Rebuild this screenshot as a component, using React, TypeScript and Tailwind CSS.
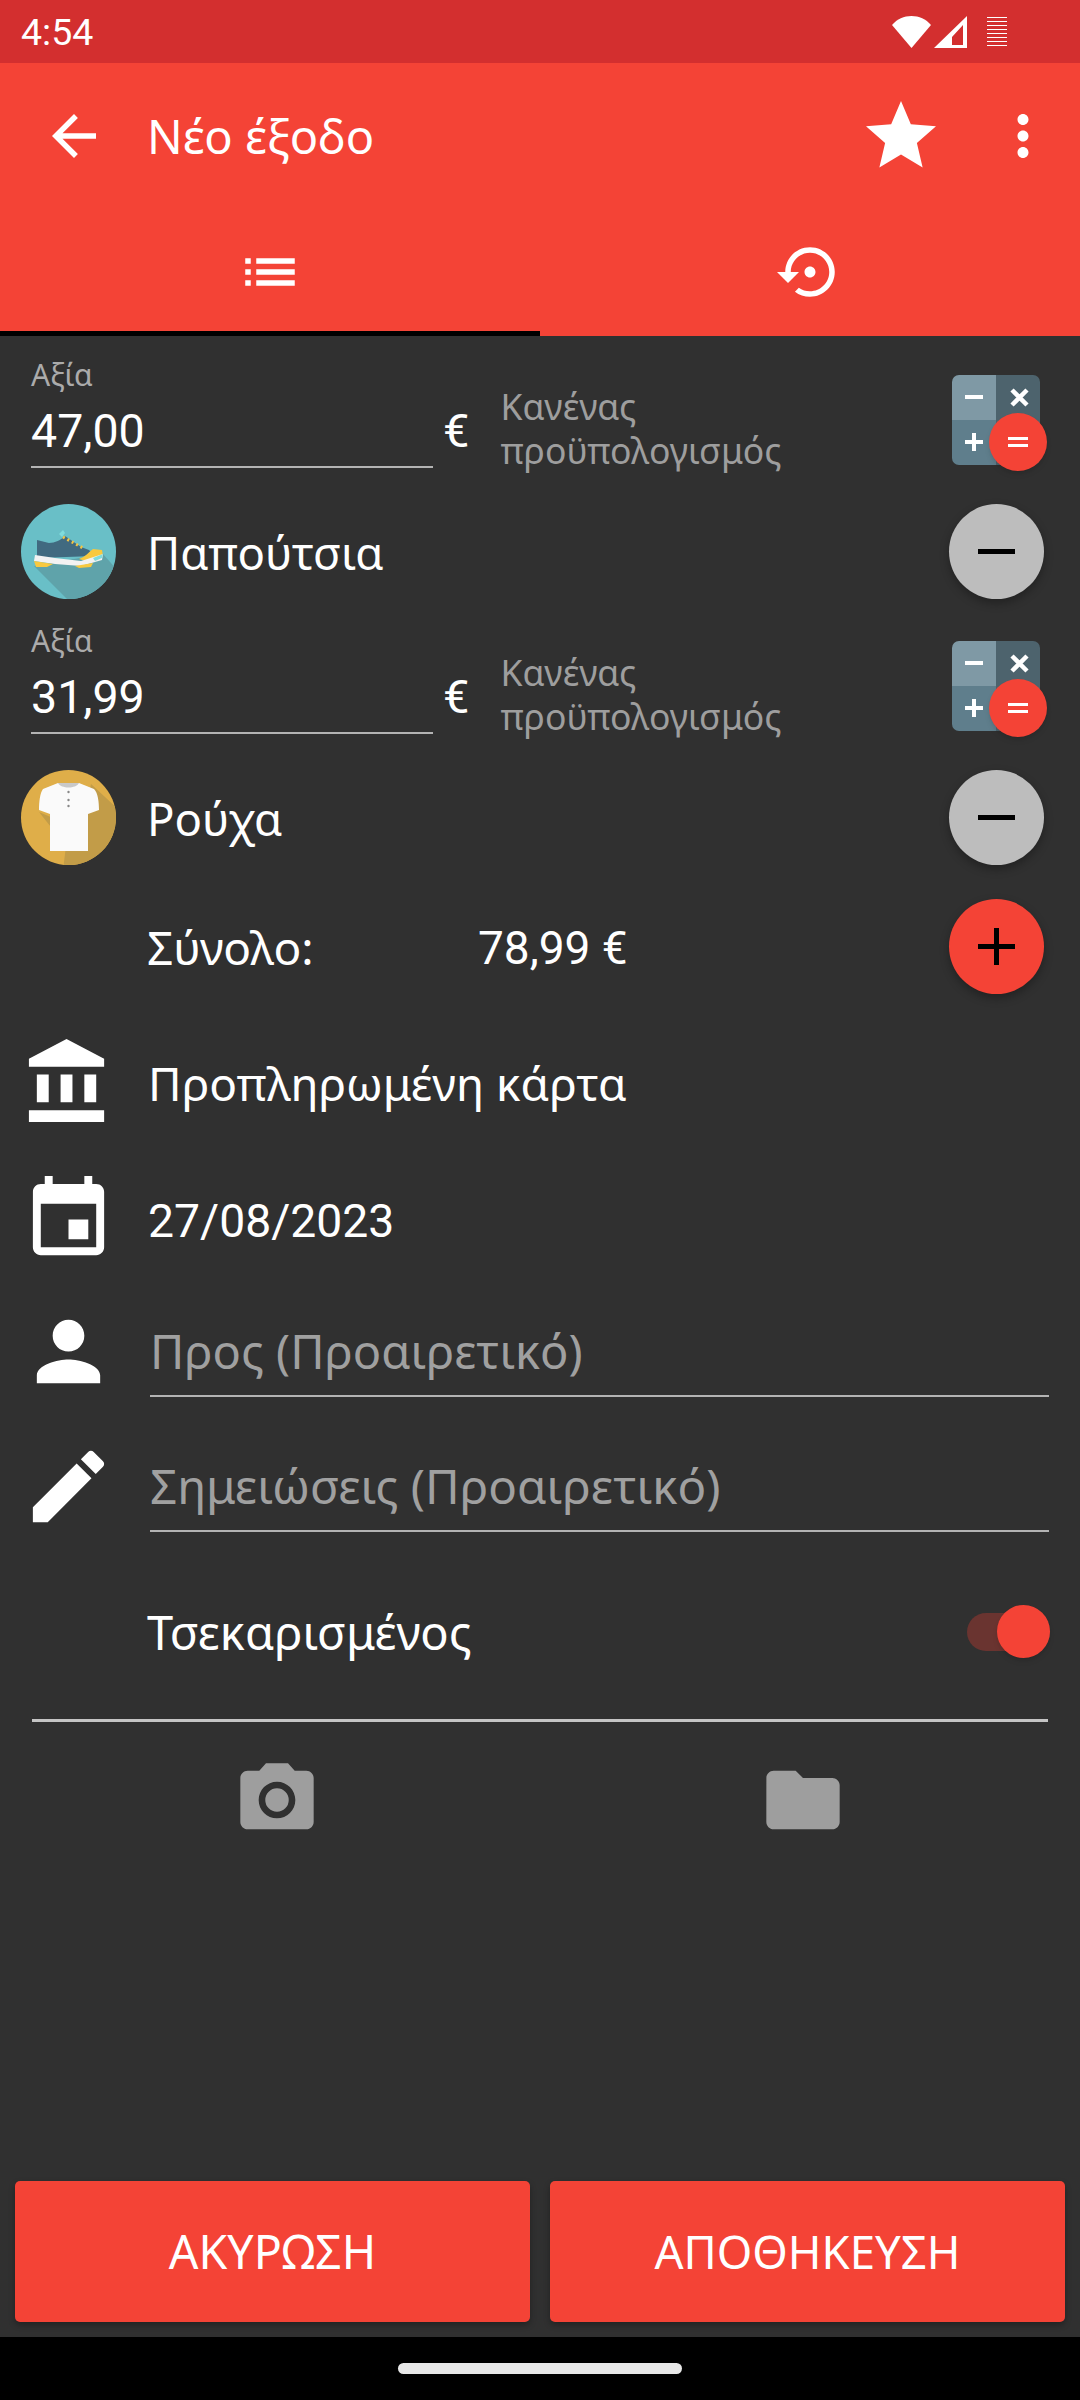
import React from "react";

const P = {
  back: "M20 11H7.83l5.59-5.59L12 4l-8 8 8 8 1.41-1.41L7.83 13H20v-2z",
  star: "M12 17.27L18.18 21l-1.64-7.03L22 9.24l-7.19-.61L12 2 9.19 8.63 2 9.24l5.46 4.73L5.82 21z",
  more: "M12 8c1.1 0 2-.9 2-2s-.9-2-2-2-2 .9-2 2 .9 2 2 2zm0 2c-1.1 0-2 .9-2 2s.9 2 2 2 2-.9 2-2-.9-2-2-2zm0 6c-1.1 0-2 .9-2 2s.9 2 2 2 2-.9 2-2-.9-2-2-2z",
  list: "M3 13h2v-2H3v2zm0 4h2v-2H3v2zm0-8h2V7H3v2zm4 4h14v-2H7v2zm0 4h14v-2H7v2zM7 7v2h14V7H7z",
  restore:
    "M14 12c0-1.1-.9-2-2-2s-2 .9-2 2 .9 2 2 2 2-.9 2-2zm-2-9c-4.97 0-9 4.03-9 9H0l4 4 4-4H5c0-3.87 3.13-7 7-7s7 3.13 7 7-3.13 7-7 7c-1.51 0-2.91-.49-4.06-1.3l-1.42 1.44C8.04 20.3 9.94 21 12 21c4.97 0 9-4.03 9-9s-4.03-9-9-9z",
  bank: "M4 10v7h3v-7H4zm6 0v7h3v-7h-3zM2 22h19v-3H2v3zm14-12v7h3v-7h-3zm-4.5-9L2 6v2h19V6l-9.5-5z",
  event:
    "M17 12h-5v5h5v-5zM16 1v2H8V1H6v2H5c-1.11 0-1.99.9-1.99 2L3 19c0 1.1.89 2 2 2h14c1.1 0 2-.9 2-2V5c0-1.1-.9-2-2-2h-1V1h-2zm3 18H5V8h14v11z",
  person:
    "M12 12c2.21 0 4-1.79 4-4s-1.79-4-4-4-4 1.79-4 4 1.79 4 4 4zm0 2c-2.67 0-8 1.34-8 4v2h16v-2c0-2.66-5.33-4-8-4z",
  edit: "M3 17.25V21h3.75L17.81 9.94l-3.75-3.75L3 17.25zM20.71 7.04c.39-.39.39-1.02 0-1.41l-2.34-2.34c-.39-.39-1.02-.39-1.41 0l-1.83 1.83 3.75 3.75 1.83-1.83z",
  camera:
    "M12 15.2a3.2 3.2 0 1 0 0-6.4 3.2 3.2 0 0 0 0 6.4zM9 2L7.17 4H4c-1.1 0-2 .9-2 2v12c0 1.1.9 2 2 2h16c1.1 0 2-.9 2-2V6c0-1.1-.9-2-2-2h-3.17L15 2H9zm3 15c-2.76 0-5-2.24-5-5s2.24-5 5-5 5 2.24 5 5-2.24 5-5 5z",
  folder:
    "M10 4H4c-1.1 0-1.99.9-1.99 2L2 18c0 1.1.9 2 2 2h16c1.1 0 2-.9 2-2V8c0-1.1-.9-2-2-2h-8l-2-2z",
};

const Icon = ({ d, className }: { d: string; className: string }) => (
  <svg viewBox="0 0 24 24" fill="currentColor" className={className}>
    <path d={d} />
  </svg>
);

// calculator tile with the red equals badge
const CalcIcon = () => (
  <div className="relative w-[88px] h-[90px]">
    <svg viewBox="0 0 88 90" className="w-[88px] h-[90px]">
      <defs>
        <clipPath id="tile">
          <rect width="88" height="90" rx="7" />
        </clipPath>
      </defs>
      <g clipPath="url(#tile)">
        <rect width="44" height="45" fill="#7f99a5" />
        <rect x="44" width="44" height="45" fill="#4d636d" />
        <rect y="45" width="44" height="45" fill="#5f7e8c" />
        <rect x="44" y="45" width="44" height="45" fill="#4d636d" />
      </g>
      <rect x="13" y="20" width="18" height="4" fill="#fff" />
      <rect x="13" y="65" width="18" height="4" fill="#fff" />
      <rect x="20" y="58" width="4" height="18" fill="#fff" />
      <path d="M60 15l15 15M75 15L60 30" stroke="#fff" strokeWidth="4.5" />
    </svg>
    <div className="absolute left-[37px] top-[38px] w-[58px] h-[58px] rounded-full bg-[#f44336] shadow-md flex flex-col items-center justify-center gap-[4px]">
      <div className="w-[20px] h-[3px] bg-white" />
      <div className="w-[20px] h-[3px] bg-white" />
    </div>
  </div>
);

const ShoeIcon = () => (
  <svg viewBox="0 0 95 95" className="w-[95px] h-[95px]">
    <defs>
      <clipPath id="shoeclip">
        <circle cx="47.5" cy="47.5" r="47.5" />
      </clipPath>
    </defs>
    <circle cx="47.5" cy="47.5" r="47.5" fill="#69bfc7" />
    <path d="M13 62L48 97L98 97L98 68L82 50Z" fill="#5fa3aa" clipPath="url(#shoeclip)" />
    <path d="M16 36L28 39C34 39 40 36 44 32L60 43L68 46L74 52L16 54Z" fill="#416a80" />
    <path d="M42 33L62 44" stroke="#f5c542" strokeWidth="3" strokeDasharray="2 3" />
    <path d="M58 55C64 53 68 48 72 45L81 46L82 52L68 58Z" fill="#f8c93f" />
    <path d="M14 51L34 54L60 57L82 50L81 56L60 62L34 60L13 57Z" fill="#f2f2f2" />
    <path d="M72 54L82 50L81 54L74 57Z" fill="#7fdcdc" />
    <path d="M13 57L32 60L26 63L15 63ZM54 62L72 59L70 63L58 64Z" fill="#f8c93f" />
    <path d="M38 30l4-4 2 3-3 4z" fill="#7fdcdc" />
  </svg>
);

const ShirtIcon = () => (
  <svg viewBox="0 0 95 95" className="w-[95px] h-[95px]">
    <defs>
      <clipPath id="shirtclip">
        <circle cx="47.5" cy="47.5" r="47.5" />
      </clipPath>
    </defs>
    <circle cx="47.5" cy="47.5" r="47.5" fill="#dfae49" />
    <path d="M18 42L45 76L42 100L100 100L100 42L70 14L60 60Z" fill="#c29c48" clipPath="url(#shirtclip)" />
    <path
      d="M37 13L58 13L73 19C77 23 78 32 78 40L67 44L67 81L29 81L29 44L18 40C18 32 19 23 22 19Z"
      fill="#fafafa"
    />
    <path d="M37 13L58 13C55 19 40 19 37 13Z" fill="#c9c9c9" />
    <circle cx="47.5" cy="22" r="1.2" fill="#888" />
    <circle cx="47.5" cy="30" r="1.2" fill="#888" />
    <circle cx="47.5" cy="36" r="1.2" fill="#888" />
  </svg>
);

const RoundButton = ({ plus }: { plus?: boolean }) => (
  <div
    className={`relative w-[95px] h-[95px] rounded-full shadow-[0_4px_10px_rgba(0,0,0,0.3)] flex items-center justify-center ${
      plus ? "bg-[#f44336]" : "bg-[#bdbdbd]"
    }`}
  >
    <div className="w-[37px] h-[5px] bg-black" />
    {plus && <div className="absolute w-[5px] h-[37px] bg-black" />}
  </div>
);

const ExpenseBlock = ({ value, name, icon }: { value: string; name: string; icon: React.ReactNode }) => (
  <div className="h-[266px]">
    <div className="relative h-[168px] flex">
      <div className="ml-[31px] w-[402px] h-[132px] flex flex-col border-b-[2px] border-[#b3b3b3]">
        <div className="mt-[24px] h-[30px] font-['Noto_Sans'] text-[30px] leading-[30px] text-[#ababab]">Αξία</div>
        <div className="mt-[14px] text-[46.5px] leading-[54px] text-white">{value}</div>
      </div>
      <div className="ml-[10px] mt-[68px] text-[47px] leading-[54px] text-white">€</div>
      <div className="ml-[31px] mt-[48px] w-[330px] font-['Noto_Sans'] text-[35.5px] leading-[44px] text-[#9e9e9e]">
        Κανένας
        <br />
        προϋπολογισμός
      </div>
      <div className="absolute left-[952px] top-[39px]">
        <CalcIcon />
      </div>
    </div>
    <div className="h-[95px] flex items-center pl-[21px] pr-[36px]">
      <div className="w-[95px] shrink-0">{icon}</div>
      <div className="ml-[31px] flex-1 font-['Noto_Sans'] text-[45.5px] leading-[56px] text-white">{name}</div>
      <RoundButton />
    </div>
  </div>
);

const InfoRow = ({ d, text, className, greek }: { d: string; text: string; className: string; greek?: boolean }) => (
  <div className={`h-[95px] flex items-center pl-[21px] text-white ${className}`}>
    <Icon d={d} className="w-[95px] h-[95px] shrink-0" />
    <div className={`ml-[32px] leading-[56px] ${greek ? "font-['Noto_Sans'] text-[46px]" : "pt-[2px] text-[46.3px]"}`}>{text}</div>
  </div>
);

const FieldRow = ({ d, text, size, className }: { d: string; text: string; size: string; className: string }) => (
  <div className={`h-[95px] flex items-center pl-[21px] text-white ${className}`}>
    <Icon d={d} className="w-[95px] h-[95px] shrink-0" />
    <div
      className={`ml-[34px] w-[899px] h-[91px] flex items-end pb-[16px] border-b-[2px] border-[#b3b3b3] font-['Noto_Sans'] leading-[56px] text-[#a0a0a0] ${size}`}
    >
      {text}
    </div>
  </div>
);

export default function App() {
  return (
    <div className="relative w-[1080px] h-[2400px] flex flex-col bg-[#303030] font-['Roboto',sans-serif] overflow-hidden">
      {/* status bar */}
      <div className="h-[63px] bg-[#d32f2f] flex items-center pl-[21px] text-white">
        <div className="flex-1 text-[37.5px] leading-[42px]">4:54</div>
        <svg viewBox="0 0 39 32" className="w-[39px] h-[32px] mr-[3px]">
          <path d="M19.5 32L0 9C5 3 12 0 19.5 0S34 3 39 9Z" fill="#fff" />
        </svg>
        <svg viewBox="0 0 33 32" className="w-[33px] h-[32px] mr-[20px]">
          <path d="M33 0V32H0ZM29 9L18 21V29H29Z" fill="#fff" fillRule="evenodd" />
        </svg>
        <div className="w-[20px] h-[30px] mr-[73px] flex flex-col justify-between">
          {[0, 1, 2, 3, 4, 5, 6, 7].map((i) => (
            <div key={i} className="h-[1.5px] bg-white" />
          ))}
        </div>
      </div>

      {/* app bar */}
      <div className="h-[273px] bg-[#f44336] text-white flex flex-col">
        <div className="h-[146px] flex items-center pl-[41px]">
          <Icon d={P.back} className="w-[66px] h-[66px]" />
          <div className="ml-[40px] flex-1 font-['Noto_Sans'] text-[47px] leading-[56px]">Νέο έξοδο</div>
          <Icon d={P.star} className="w-[84px] h-[84px] mr-[47px]" />
          <Icon d={P.more} className="w-[66px] h-[66px] mr-[24px]" />
        </div>
        <div className="flex-1 flex">
          <div className="flex-1 flex items-center justify-center pt-[4px] border-b-[5px] border-black">
            <Icon d={P.list} className="w-[66px] h-[66px]" />
          </div>
          <div className="flex-1 flex items-center justify-center pb-[1px]">
            <Icon d={P.restore} className="w-[66px] h-[66px]" />
          </div>
        </div>
      </div>

      {/* expense lines */}
      <ExpenseBlock value="47,00" name="Παπούτσια" icon={<ShoeIcon />} />
      <ExpenseBlock value="31,99" name="Ρούχα" icon={<ShirtIcon />} />

      <div className="mt-[31px] h-[95px] flex items-center pr-[36px] text-[46px] leading-[54px] text-white">
        <div className="ml-[147px] w-[331px] font-['Noto_Sans']">Σύνολο:</div>
        <div className="flex-1 pt-[2px]">78,99 €</div>
        <RoundButton plus />
      </div>

      <InfoRow d={P.bank} text="Προπληρωμένη κάρτα" className="mt-[41px]" greek />
      <InfoRow d={P.event} text="27/08/2023" className="mt-[42px]" />
      <FieldRow d={P.person} text="Προς (Προαιρετικό)" size="text-[47px]" className="mt-[37px]" />
      <FieldRow d={P.edit} text="Σημειώσεις (Προαιρετικό)" size="text-[47.5px]" className="mt-[40px]" />

      <div className="mt-[58px] h-[80px] flex items-center pl-[147px] pr-[30px] font-['Noto_Sans'] text-[47px] leading-[54px] text-white">
        <div className="flex-1">Τσεκαρισμένος</div>
        <div className="relative w-[83px] h-[38px] rounded-full bg-[#6a3430]">
          <div className="absolute right-0 top-[-8px] w-[53px] h-[53px] rounded-full bg-[#f44336] shadow-md" />
        </div>
      </div>

      <div className="mt-[47px] mx-[32px] h-[3px] bg-[#c4c4c4]" />

      <div className="mt-[34px] flex text-[#9e9e9e]">
        <div className="w-[540px] flex justify-center">
          <Icon d={P.camera} className="w-[88px] h-[88px] ml-[13px]" />
        </div>
        <div className="w-[540px] flex justify-center">
          <Icon d={P.folder} className="w-[88px] h-[88px] -ml-[14px]" />
        </div>
      </div>

      {/* bottom buttons */}
      <div className="mt-auto px-[15px] pb-[15px] flex gap-[20px]">
        <div className="flex-1 h-[141px] rounded-[5px] bg-[#f44336] shadow-[0_3px_6px_rgba(0,0,0,0.3)] flex items-center justify-center font-['Noto_Sans'] text-[46.5px] text-white">
          ΑΚΥΡΩΣΗ
        </div>
        <div className="flex-1 h-[141px] rounded-[5px] bg-[#f44336] shadow-[0_3px_6px_rgba(0,0,0,0.3)] flex items-center justify-center font-['Noto_Sans'] text-[45.5px] text-white">
          ΑΠΟΘΗΚΕΥΣΗ
        </div>
      </div>

      {/* nav bar */}
      <div className="h-[63px] bg-black flex justify-center pt-[26px]">
        <div className="w-[284px] h-[11px] rounded-full bg-[#e8e8e8]" />
      </div>
    </div>
  );
}
